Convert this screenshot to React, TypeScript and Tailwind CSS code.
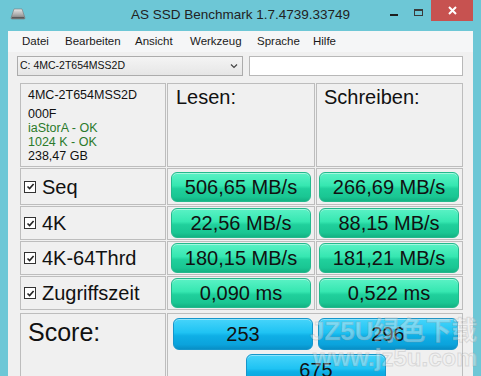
import React from "react";

type Row = {
  key: string;
  label: string;
  read: string;
  write: string;
  height: string;
};

const rows: Row[] = [
  { key: "seq", label: "Seq", read: "506,65 MB/s", write: "266,69 MB/s", height: "h-[37px]" },
  { key: "4k", label: "4K", read: "22,56 MB/s", write: "88,15 MB/s", height: "h-[34px]" },
  { key: "4k64", label: "4K-64Thrd", read: "180,15 MB/s", write: "181,21 MB/s", height: "h-[34px]" },
  { key: "acc", label: "Zugriffszeit", read: "0,090 ms", write: "0,522 ms", height: "h-[34px]" },
];

const menu = [
  { name: "Datei", w: "w-[43px]" },
  { name: "Bearbeiten", w: "w-[70px]" },
  { name: "Ansicht", w: "w-[55px]" },
  { name: "Werkzeug", w: "w-[67px]" },
  { name: "Sprache", w: "w-[56px]" },
  { name: "Hilfe", w: "w-[40px]" },
];

const GreenValue = ({ value }: { value: string }) => (
  <div className="flex h-[30px] w-[140px] items-center justify-center rounded-[6px] border border-[#23b98c] bg-[linear-gradient(to_bottom,#5af2c5_0%,#36e7b1_45%,#20d09c_56%,#1ac693_85%,#13b283_100%)] text-[20px] leading-none text-[#111] shadow-[inset_0_1px_0_rgba(255,255,255,0.45)]">
    {value}
  </div>
);

const BlueValue = ({ value }: { value: string }) => (
  <div className="flex h-[32px] w-[140px] items-center justify-center rounded-[6px] border border-[#1596cb] bg-[linear-gradient(to_bottom,#46d4fa_0%,#1fc3f3_45%,#0fafe6_56%,#0ba3dc_85%,#088fc6_100%)] text-[20px] leading-none text-[#111] shadow-[inset_0_1px_0_rgba(255,255,255,0.4)]">
    {value}
  </div>
);

const CheckBox = () => (
  <div className="flex h-[12px] w-[12px] items-center justify-center border border-[#333] bg-white">
    <svg width="9" height="9" viewBox="0 0 9 9">
      <path d="M1.5 4.5 L3.6 6.6 L7.6 2" fill="none" stroke="#222" strokeWidth="1.6" />
    </svg>
  </div>
);

const DriveIcon = () => (
  <svg width="16" height="12" viewBox="0 0 16 12">
    <defs>
      <linearGradient id="drv" x1="0" y1="0" x2="0" y2="1">
        <stop offset="0" stopColor="#e8e8e8" />
        <stop offset="0.6" stopColor="#a8a8a8" />
        <stop offset="1" stopColor="#6e6e6e" />
      </linearGradient>
    </defs>
    <path d="M4 1 H12 L15 10 Q15 11 14 11 H2 Q1 11 1 10 Z" fill="url(#drv)" stroke="#777" strokeWidth="0.6" />
    <rect x="2" y="9" width="12" height="1.2" fill="#5a5a5a" />
  </svg>
);

export default function App() {
  return (
    <div className="relative flex h-[376px] w-[481px] flex-col overflow-hidden bg-[#6dc7d6] font-['Liberation_Sans',Arial,sans-serif] text-[#111]">
      {/* title bar */}
      <div className="grid h-[31px] shrink-0 grid-cols-[1fr_auto_1fr]">
        <div className="flex items-center pl-[10px] pb-[3px]">
          <DriveIcon />
        </div>
        <div className="flex items-center text-[13.5px] text-[#222]">
          AS SSD Benchmark 1.7.4739.33749
        </div>
        <div className="flex items-start justify-end pr-[8px]">
          <div className="flex h-[21px] w-[25px] items-center justify-center">
            <div className="mt-[8px] h-[2px] w-[8px] bg-[#1e1e1e]" />
          </div>
          <div className="flex h-[21px] w-[25px] items-center justify-center">
            <div className="mt-[3px] h-[7px] w-[9px] border border-t-2 border-[#3a3a3a]" />
          </div>
          <div className="flex h-[21px] w-[42px] items-center justify-center bg-[#c75250]">
            <svg width="9" height="9" viewBox="0 0 9 9">
              <path d="M1 1 L8 8 M8 1 L1 8" stroke="#fff" strokeWidth="2" />
            </svg>
          </div>
        </div>
      </div>

      {/* client area */}
      <div className="mx-[8px] flex flex-1 flex-col bg-[#f0f0f0]">
        <div className="flex h-[21px] shrink-0 items-center bg-[#f5f6f7] pl-[14px] text-[11.5px] text-[#1a1a1a]">
          {menu.map((m) => (
            <span key={m.name} className={m.w}>
              {m.name}
            </span>
          ))}
        </div>

        <div className="mt-[4px] flex gap-[6px] pl-[9px]">
          <div className="flex h-[20px] w-[226px] items-center justify-between border border-[#acacac] bg-[linear-gradient(to_bottom,#f4f4f4,#e6e6e6)] pl-[2px] pr-[4px] text-[10.5px]">
            <span>C: 4MC-2T654MSS2D</span>
            <svg width="8" height="6" viewBox="0 0 8 6">
              <path d="M1 1.5 L4 4.5 L7 1.5" fill="none" stroke="#444" strokeWidth="1.2" />
            </svg>
          </div>
          <div className="h-[20px] w-[214px] border border-[#b8b8b8] bg-white" />
        </div>

        {/* results table */}
        <div className="ml-[12px] mt-[7px] grid w-[443px] grid-cols-[146px_148px_147px] gap-[1px]">
          <div className="h-[84px] border border-[#bdbdbd] pl-[7px] pt-[4px] text-[12.5px] leading-[14px]">
            <div className="mb-[5px]">4MC-2T654MSS2D</div>
            <div>000F</div>
            <div className="text-[#2b7a2b]">iaStorA - OK</div>
            <div className="text-[#2b7a2b]">1024 K - OK</div>
            <div>238,47 GB</div>
          </div>
          <div className="h-[84px] border border-[#bdbdbd] pl-[8px] pt-[2px] text-[20px] leading-[23px]">
            Lesen:
          </div>
          <div className="h-[84px] border border-[#bdbdbd] pl-[7px] pt-[2px] text-[20px] leading-[23px]">
            Schreiben:
          </div>

          {rows.map((r) => (
            <React.Fragment key={r.key}>
              <div className={`${r.height} flex items-center gap-[6px] border border-[#bdbdbd] pl-[3px] text-[20px]`}>
                <CheckBox />
                <span>{r.label}</span>
              </div>
              <div className={`${r.height} flex items-center border border-[#bdbdbd] pl-[3px]`}>
                <GreenValue value={r.read} />
              </div>
              <div className={`${r.height} flex items-center border border-[#bdbdbd] pl-[2px]`}>
                <GreenValue value={r.write} />
              </div>
            </React.Fragment>
          ))}

          <div className="mt-[2px] h-[80px] border border-[#bdbdbd] pl-[7px] pt-[4px] text-[25px] leading-[29px]">
            Score:
          </div>
          <div className="col-span-2 mt-[2px] flex h-[80px] flex-col gap-[4px] border border-[#bdbdbd] pl-[5px] pt-[4px]">
            <div className="flex gap-[5px]">
              <BlueValue value="253" />
              <BlueValue value="296" />
            </div>
            <div className="flex pl-[73px]">
              <BlueValue value="675" />
            </div>
          </div>
        </div>
      </div>

      {/* watermark */}
      <div className="pointer-events-none absolute left-[310px] top-[318px] flex flex-col leading-none">
        <span className="font-['Liberation_Sans','Noto_Sans_CJK_SC',sans-serif] text-[26px] font-bold text-[rgba(240,240,240,0.4)] [-webkit-text-stroke:1px_rgba(140,140,140,0.25)]">
          JZ5U绿色下载
        </span>
        <span className="mt-[2px] pl-[3px] text-[24px] font-bold text-[rgba(240,240,240,0.4)] [-webkit-text-stroke:1px_rgba(140,140,140,0.25)]">
          www.jz5u.com
        </span>
      </div>
    </div>
  );
}
